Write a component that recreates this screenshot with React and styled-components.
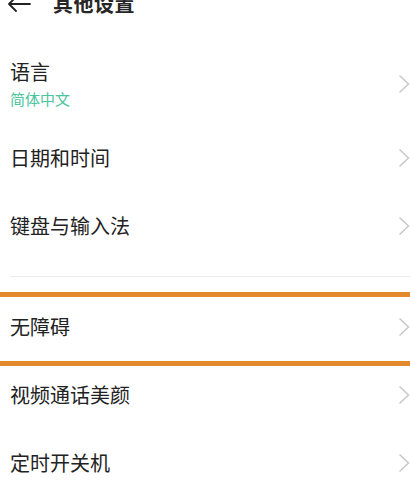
import React from "react";
import styled, { createGlobalStyle } from "styled-components";

const Global = createGlobalStyle`
  html, body { margin: 0; padding: 0; background: #ffffff; }
  body { font-family: "Noto Sans CJK SC", "Noto Sans", sans-serif; color: #222; overflow: hidden; }
`;

const Page = styled.div`
  display: flex;
  flex-direction: column;
  width: 410px;
  height: 488px;
  overflow: hidden;
  background: #fff;
`;

const Header = styled.div`
  display: flex;
  align-items: center;
  height: 24px;
  margin-top: -8px;
  padding-left: 7px;
  gap: 22px;
  flex-shrink: 0;
`;

const Title = styled.div`
  font-size: 20px;
  line-height: 24px;
  font-weight: 700;
  color: #262626;
  letter-spacing: 0.5px;
`;

const List = styled.div`
  display: flex;
  flex-direction: column;
  margin-top: 34px;
`;

const Row = styled.div`
  position: relative;
  display: flex;
  align-items: center;
  justify-content: space-between;
  height: ${(p) => p.$h || 68}px;
  padding: 0 0 ${(p) => p.$pb || 0}px 10px;
  box-sizing: border-box;
  flex-shrink: 0;
`;

const Highlight = styled(Row)`
  &::before,
  &::after {
    content: "";
    position: absolute;
    left: 0;
    right: 0;
    height: 5px;
    background: #e38b2c;
  }
  &::before { top: -1px; }
  &::after { bottom: -5px; }
`;

const TextCol = styled.div`
  display: flex;
  flex-direction: column;
  gap: 3px;
`;

const Label = styled.div`
  font-size: 20px;
  line-height: 26px;
  color: #222;
`;

const Sub = styled.div`
  font-size: 15px;
  line-height: 22px;
  color: #4bc59c;
`;

const Divider = styled.div`
  height: 1px;
  background: #ebebeb;
  margin: 16px 0 16px 10px;
  flex-shrink: 0;
`;

const Chevron = () => (
  <svg width="12" height="20" viewBox="0 0 12 20" fill="none">
    <path d="M1.5 1.5 L10.5 10 L1.5 18.5" stroke="#c6c6c6" strokeWidth="1.4" strokeLinejoin="miter" />
  </svg>
);

const BackArrow = () => (
  <svg width="24" height="24" viewBox="0 0 24 24" fill="none">
    <path d="M2 12 H23 M2 12 L9 5 M2 12 L9 19" stroke="#222" strokeWidth="1.8" strokeLinecap="round" strokeLinejoin="round" />
  </svg>
);

export default function App() {
  return (
    <Page>
      <Global />
      <Header>
        <BackArrow />
        <Title>其他设置</Title>
      </Header>
      <List>
        <Row $h={74} $pb={6}>
          <TextCol>
            <Label>语言</Label>
            <Sub>简体中文</Sub>
          </TextCol>
          <Chevron />
        </Row>
        <Row>
          <Label>日期和时间</Label>
          <Chevron />
        </Row>
        <Row>
          <Label>键盘与输入法</Label>
          <Chevron />
        </Row>
        <Divider />
        <Highlight>
          <Label>无障碍</Label>
          <Chevron />
        </Highlight>
        <Row>
          <Label>视频通话美颜</Label>
          <Chevron />
        </Row>
        <Row>
          <Label>定时开关机</Label>
          <Chevron />
        </Row>
      </List>
    </Page>
  );
}
